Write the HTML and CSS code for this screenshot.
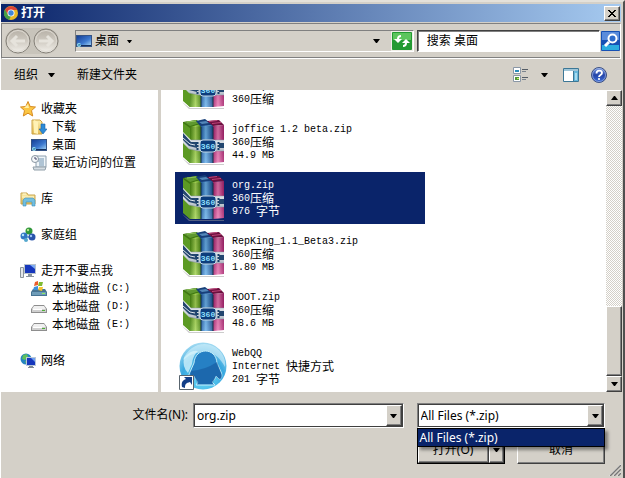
FILE: index.html
```html
<!DOCTYPE html>
<html lang="zh-CN">

<head>
    <meta charset="UTF-8">
    <meta name="viewport" content="width=device-width, initial-scale=1.0">
    <title>打开</title>
    <link rel="stylesheet" href="styles.css">
</head>

<body>
    <!-- shared icons -->
    <svg class="defs" aria-hidden="true">
        <defs>
            <linearGradient id="gGreen"><stop offset="0" stop-color="#4a8a12"/><stop offset=".5" stop-color="#a4d455"/><stop offset="1" stop-color="#47830f"/></linearGradient>
            <linearGradient id="gBlue"><stop offset="0" stop-color="#1e5aa4"/><stop offset=".4" stop-color="#6db4ec"/><stop offset="1" stop-color="#174a8c"/></linearGradient>
            <linearGradient id="gPink"><stop offset="0" stop-color="#a81f6c"/><stop offset=".45" stop-color="#ea79b4"/><stop offset="1" stop-color="#a8226e"/></linearGradient>
            <linearGradient id="gShade" x2="0" y2="1"><stop offset="0" stop-color="#000" stop-opacity=".15"/><stop offset=".35" stop-color="#000" stop-opacity=".1"/><stop offset="1" stop-color="#fff" stop-opacity=".15"/></linearGradient>
            <linearGradient id="gBelt" x2="0" y2="1"><stop offset="0" stop-color="#ffffff"/><stop offset="1" stop-color="#b4bec8"/></linearGradient>
            <linearGradient id="gScreen" x2="1" y2="1"><stop offset="0" stop-color="#153f96"/><stop offset=".6" stop-color="#3d79cf"/><stop offset="1" stop-color="#9accf2"/></linearGradient>
            <linearGradient id="gDisc" x2="0" y2="1"><stop offset="0" stop-color="#b5afa5"/><stop offset=".5" stop-color="#cfcac1"/><stop offset="1" stop-color="#f3f1ec"/></linearGradient>
            <radialGradient id="gBall" cx=".5" cy=".75" r=".75"><stop offset="0" stop-color="#6ee0fa"/><stop offset=".6" stop-color="#3aa9e0"/><stop offset="1" stop-color="#a5dcf2"/></radialGradient>
            <linearGradient id="gFolder" x2="0" y2="1"><stop offset="0" stop-color="#fdf0ae"/><stop offset="1" stop-color="#e3bb55"/></linearGradient>
            <linearGradient id="gHelp" x2="0" y2="1"><stop offset="0" stop-color="#7f9ee4"/><stop offset=".5" stop-color="#2444a8"/><stop offset="1" stop-color="#3c6ed8"/></linearGradient>
        </defs>
        <symbol id="zip" viewBox="0 0 48 48">
            <path d="M3 40l8 6h34v1H10z" fill="#999" opacity=".5"/>
            <path d="M4 4l14-2 4 5v38H11L4 38z" fill="#3f7611"/>
            <path d="M4 5l7 5v35l-7-6z" fill="#5c9a24"/>
            <path d="M11 9l11-3v39H11z" fill="url(#gGreen)"/>
            <path d="M5 4l12-2 4 3-10 3z" fill="#5f9830"/>
            <path d="M8 4l9-1" stroke="#8fc25c"/>
            <path d="M17 3l9-2 8 6-12 2z" fill="#173f79"/>
            <path d="M20 4l7-1 3 2-7 1z" fill="#5387b9"/>
            <path d="M22 8l12-1v38H22z" fill="url(#gBlue)"/>
            <path d="M28 3l12-1 5 5-11 1z" fill="#6c103f"/>
            <path d="M30 3.500l8-1M33 5.500l9-1" stroke="#c0447a"/>
            <path d="M34 8l11-1v37l-11 1z" fill="url(#gPink)"/>
            <path d="M11 9l34-2v37l-11 1H11z" fill="url(#gShade)"/>
            <path d="M22 9v36M34 9v36" stroke="#16344b"/>
            <!-- belt and buckle -->
            <path d="M4 14l8 8h33v11H20l-10-2-6-6z" fill="url(#gBelt)"/>
            <path d="M4 15l8 9h6v6l-8-2-6-6z" fill="#23466f"/>
            <path d="M4 20l7 6 5 1" stroke="#dfe6ec" fill="none"/>
            <path d="M40 25h5v5h-5z" fill="#23466f"/>
            <path d="M12 22h33M10 31l10 2h25" stroke="#8593a0" stroke-width=".5" fill="none"/>
            <path d="M18.500 24v8M39.500 24v8" stroke="#17406c" stroke-width="2" stroke-dasharray="2 1"/>
            <rect x="21" y="22" width="16" height="12" rx="3" fill="#0c3d7c" stroke="#c0d6e5"/>
            <text x="29" y="31" class="zip-label">360</text>
        </symbol>
        <symbol id="drive" viewBox="0 0 16 16">
            <path d="M3 6h10l3 4v4H0v-4z" fill="#8e8e8e"/>
            <path d="M3 7h10l2 3H1z" fill="#f0f0f0"/>
            <path d="M1 10h14v3H1z" fill="#cfcfcf"/>
            <path d="M2 10h9v1H2z" fill="#fff"/>
            <path d="M11 11h3v1h-3z" fill="#4cae35"/>
        </symbol>
        <symbol id="screen" viewBox="0 0 16 14">
            <path d="M0 1h16v12H0z" fill="#355384"/>
            <path d="M1 2h14v9H1z" fill="url(#gScreen)"/>
            <path d="M1 11h14v1H1z" fill="#13305f"/>
            <circle cx="3" cy="11" r="2" fill="#99ddf0"/>
            <path d="M2 11h2v-1" stroke="#1e70a5" fill="none"/>
        </symbol>
        <symbol id="down" viewBox="0 0 7 4"><path d="M0 0h7L4 4H3z" fill="#000"/></symbol>
    </svg>

    <main class="dialog">
        <header class="titlebar">
            <svg class="icon" viewBox="0 0 16 16">
                <circle cx="8" cy="8" r="7" fill="#e8b925"/>
                <path d="M2 5a7 7 0 0 1 12.500 0H8L5 10z" fill="#dc4437"/>
                <path d="M2 4.500L5 10l3 1-2 4A7 7 0 0 1 2 4.500z" fill="#45a047"/>
                <circle cx="8" cy="8" r="3.500" fill="#fff"/>
                <circle cx="8" cy="8" r="2.700" fill="#4087d8"/>
            </svg>
            <h1>打开</h1>
            <button class="close raised" aria-label="关闭"><svg width="8" height="7" viewBox="0 0 8 7"><path d="M0 0l7 7M7 0L0 7M1 0l7 7M8 0L1 7" stroke="#000"/></svg></button>
        </header>

        <nav class="navbar">
            <div class="history">
                <button aria-label="后退"><svg viewBox="0 0 26 26"><circle cx="13" cy="13" r="12" fill="url(#gDisc)" stroke="#858179"/><circle cx="13" cy="13" r="10.500" fill="none" stroke="#dedad2"/><path d="M20 13H7M12 8l-5 5 5 5" fill="none" stroke="#e6e3dc" stroke-width="3"/></svg></button>
                <button aria-label="前进"><svg viewBox="0 0 26 26"><circle cx="13" cy="13" r="12" fill="url(#gDisc)" stroke="#858179"/><circle cx="13" cy="13" r="10.500" fill="none" stroke="#dedad2"/><path d="M6 13h13M14 8l5 5-5 5" fill="none" stroke="#e6e3dc" stroke-width="3"/></svg></button>
            </div>
            <div class="address">
                <svg class="icon"><use href="#screen"/></svg>
                <button class="crumb">桌面 <svg class="tiny"><use href="#down"/></svg></button>
                <button class="history-drop" aria-label="以前的位置"><svg class="arrow"><use href="#down"/></svg></button>
                <button class="refresh" aria-label="刷新">
                    <svg width="20" height="18" viewBox="0 0 20 18"><rect width="20" height="18" rx="1" fill="#239a32"/><path d="M1 1h18v7H1z" fill="#5cc55c"/><path d="M6 8V7q0-3 3-3M14 10v1q0 3-3 3" fill="none" stroke="#fff" stroke-width="2"/><path d="M2 7h8l-4 4zM10 11h8l-4-4z" fill="#fff"/></svg>
                </button>
            </div>
            <div class="search">
                <input type="text" placeholder="搜索 桌面" aria-label="搜索 桌面">
                <button aria-label="搜索">
                    <svg width="19" height="20" viewBox="0 0 19 20"><rect width="19" height="20" rx="1" fill="#1751b4"/><path d="M1 1h17v8H1z" fill="#5b8cdb"/><path d="M1 14h17v5H1z" fill="#2bacdf"/><circle cx="11.500" cy="7.500" r="4" fill="#2f6ccb" stroke="#fff" stroke-width="2"/><path d="M8 11l-4 4" stroke="#fff" stroke-width="3"/></svg>
                </button>
            </div>
        </nav>

        <div class="toolbar">
            <button class="organize">组织 <svg class="arrow"><use href="#down"/></svg></button>
            <button>新建文件夹</button>
            <button class="views" aria-label="更改视图">
                <svg class="icon" viewBox="0 0 16 16"><path d="M.5.5h7v6h-7zM.5 8.500h7v6h-7z" fill="#fff" stroke="#8a97a6"/><path d="M2 3h4v2H2z" fill="#2b8dbb"/><path d="M2 10h4v3H2z" fill="#54973a"/><path d="M4 11h2v1H4z" fill="#ce6"/><path d="M9 2.500h6M9 10.500h6" stroke="#555d66"/><path d="M9 4.500h4M9 12.500h4" stroke="#7c858e"/></svg>
                <svg class="arrow"><use href="#down"/></svg>
            </button>
            <button class="preview" aria-label="显示预览窗格"><svg class="icon" viewBox="0 0 16 16"><path d="M.5 1.500h15v13H.5z" fill="#fff" stroke="#3c7796"/><path d="M1 2h14v2H1z" fill="#9fc5d8"/><path d="M10 4h5v10h-5z" fill="#67b7db"/><path d="M10.500 4v10" stroke="#3c7796"/><path d="M12 6h2v7h-2z" fill="#a8dcef"/></svg></button>
            <button class="help" aria-label="帮助"><svg class="icon" viewBox="0 0 16 16"><circle cx="8" cy="8" r="7.500" fill="url(#gHelp)" stroke="#3e5182"/><circle cx="8" cy="8" r="6.500" fill="none" stroke="#b6c7ee" stroke-width=".6"/><path d="M5.500 6.500c0-4 5.500-3.500 5.500-.5 0 2-3 2-3 4" fill="none" stroke="#fff" stroke-width="1.800"/><circle cx="8" cy="12" r="1.100" fill="#fff"/></svg></button>
        </div>

        <div class="panes">
            <aside class="tree">
                <ul>
                    <li><svg class="icon" viewBox="0 0 16 16"><path d="M8 .5l2.200 5 5.300.5-4 3.600 1.200 5.400L8 12.200 3.300 15l1.200-5.400L.5 6l5.300-.5z" fill="#fbc643" stroke="#d78a20"/><path d="M8 3l1 4H4z" fill="#fff0a8"/></svg>收藏夹</li>
                    <li class="sub"><svg class="icon" viewBox="0 0 16 16"><path d="M1 1h8l2 2v12H1z" fill="url(#gFolder)" stroke="#cba244"/><path d="M3 1l4 2v12l-4-1z" fill="#fff2b5"/><path d="M10 5h4v5h2l-4 5-4-5h2z" fill="#2c8bd8" stroke="#1b62a8" stroke-width=".6"/></svg>下载</li>
                    <li class="sub"><svg class="icon"><use href="#screen"/></svg>桌面</li>
                    <li class="sub"><svg class="icon" viewBox="0 0 16 16"><path d="M5 1h10v11H5z" fill="#eef4f8" stroke="#8e9fae"/><path d="M7 4h6M7 6h6M8 8h5M8 10h5" stroke="#7193b0"/><path d="M2 12h13l-1 3H3z" fill="#d5dde3" stroke="#92a0aa"/><circle cx="4" cy="4" r="3.500" fill="#f5f8fa" stroke="#8996a1"/><path d="M4 2v2h2" fill="none" stroke="#446"/></svg>最近访问的位置</li>
                </ul>
                <ul>
                    <li><svg class="icon" viewBox="0 0 16 16"><path d="M1 2h6l1 2h7v9H1z" fill="url(#gFolder)" stroke="#c8a54f"/><path d="M3 3h3M2 6h12" stroke="#fff8d0"/><path d="M3 15V9l2-2h8l2 2v6h-3v-4H6v4z" fill="#72bfe0" stroke="#3e8fb8" stroke-width=".6"/></svg>库</li>
                </ul>
                <ul>
                    <li><svg class="icon" viewBox="0 0 16 16"><path d="M4 10l4-6 4 6z" fill="none" stroke="#83b5d2" stroke-width="2"/><circle cx="9" cy="4" r="3.500" fill="#2f963a"/><circle cx="4" cy="9" r="3.500" fill="#3277c5"/><circle cx="12" cy="10" r="3.500" fill="#2853ab"/><circle cx="8" cy="3" r="1.200" fill="#b4e58c"/><circle cx="3" cy="8" r="1.200" fill="#b5e5fa"/><circle cx="11" cy="9" r="1.200" fill="#9bc5f5"/><circle cx="6" cy="13" r="2" fill="#56a8ce"/></svg>家庭组</li>
                </ul>
                <ul>
                    <li><svg class="icon" viewBox="0 0 16 16"><path d="M.5 4.500h3v10h-3z" fill="#e3e7ea" stroke="#8b949b"/><path d="M4 1h12v10H4z" fill="#b7c2cd"/><path d="M5 2h10v8H5z" fill="#1637bc"/><path d="M10 2h5v4z" fill="#7eabf3"/><path d="M8 11h4v2h2v1H6v-1h2z" fill="#89949e"/></svg>走开不要点我</li>
                    <li class="sub"><svg class="icon" viewBox="0 0 16 16"><path d="M2 8h12l2 3v4H0v-4z" fill="#477392"/><path d="M1 11h14v3H1z" fill="#6e9cb8"/><path d="M11 12h3v1h-3z" fill="#8df05e"/><path d="M4 1l3-1v4L3 5z" fill="#ea5d2b"/><path d="M8 1l4 0-1 4-4 0z" fill="#7fbb32"/><path d="M3 6l4-1v4L2 9z" fill="#3c8fdb"/><path d="M8 6h4l-1 4-4-1z" fill="#f5c22d"/></svg>本地磁盘<span class="en"> (C:)</span></li>
                    <li class="sub"><svg class="icon"><use href="#drive"/></svg>本地磁盘<span class="en"> (D:)</span></li>
                    <li class="sub"><svg class="icon"><use href="#drive"/></svg>本地磁盘<span class="en"> (E:)</span></li>
                </ul>
                <ul>
                    <li><svg class="icon" viewBox="0 0 16 16"><circle cx="6" cy="6" r="5.500" fill="#2584c1"/><path d="M3 2l4-1 1 3-3 3-3-1zM5 8l3 1-2 2z" fill="#5fc05b"/><path d="M6 4h10v9H6z" fill="#b9c7d8"/><path d="M7 5h8v7H7z" fill="#1637bc"/><path d="M11 5h4v4z" fill="#6e9ff0"/><path d="M9 13h4v1h1v1H8v-1h1z" fill="#808b96"/></svg>网络</li>
                </ul>
            </aside>

            <ul class="files">
                <li class="partial">
                    <svg><use href="#zip"/></svg>
                    <div><p>co.zip</p><p>360<span class="zh">压缩</span></p></div>
                </li>
                <li>
                    <svg><use href="#zip"/></svg>
                    <div><p>joffice 1.2 beta.zip</p><p>360<span class="zh">压缩</span></p><p>44.9 MB</p></div>
                </li>
                <li class="selected">
                    <svg><use href="#zip"/></svg>
                    <div><p>org.zip</p><p>360<span class="zh">压缩</span></p><p>976 <span class="zh">字节</span></p></div>
                </li>
                <li>
                    <svg><use href="#zip"/></svg>
                    <div><p>RepKing_1.1_Beta3.zip</p><p>360<span class="zh">压缩</span></p><p>1.80 MB</p></div>
                </li>
                <li>
                    <svg><use href="#zip"/></svg>
                    <div><p>ROOT.zip</p><p>360<span class="zh">压缩</span></p><p>48.6 MB</p></div>
                </li>
                <li>
                    <svg viewBox="0 0 48 48">
                        <circle cx="24" cy="24" r="23.500" fill="url(#gBall)"/>
                        <path d="M4 18C9 4 24-2 36 5c8 5 11 13 10 20-5-9-9-13-17-14C18 9 11 12 4 18z" fill="#d5f2fb" opacity=".6"/>
                        <path d="M5 16q7-9 14-7-5 4-6 13l-4 9q-6-6-4-15z" fill="#d9f6fc" opacity=".75"/>
                        <path d="M15 21c1-16 22-16 23 0l4 9c2 4 0 8-2 7l-3-3c-1 3-2 4-4 6l3 3H17l2-3c-2-2-3-4-4-6l-4 2c-2 0-1-4 0-6z" fill="#2680c4" stroke="#c3eefa"/>
                        <path d="M12 29q14-1 26-9l4 11c2 4 0 7-2 6l-3-3-4 8H19l-4-8-4 2z" fill="#15599f" opacity=".6"/>
                        <path d="M.5 33.500h14v14H.5z" fill="#fff" stroke="#58646e"/>
                        <path d="M3 45c-1-5 1-7 4-8l-2-2h8v8l-2-3c-4 1-5 2-5 6z" fill="#123f88"/>
                    </svg>
                    <div><p>WebQQ</p><p>Internet <span class="zh">快捷方式</span></p><p>201 <span class="zh">字节</span></p></div>
                </li>
            </ul>

            <div class="scrollbar">
                <button class="raised" aria-label="向上"><svg class="arrow up"><use href="#down"/></svg></button>
                <div class="track"><div class="thumb raised"></div></div>
                <button class="raised" aria-label="向下"><svg class="arrow"><use href="#down"/></svg></button>
            </div>
        </div>

        <footer class="footer">
            <label for="filename">文件名(N):</label>
            <div class="combo">
                <input id="filename" type="text" value="org.zip">
                <button class="raised" aria-label="文件列表"><svg class="arrow"><use href="#down"/></svg></button>
            </div>
            <div class="right">
                <div class="combo filter">
                    <select aria-label="文件类型"><option>All Files (*.zip)</option></select>
                    <span class="drop raised"><svg class="arrow"><use href="#down"/></svg></span>
                    <ul class="menu"><li>All Files (*.zip)</li></ul>
                </div>
                <div class="actions">
                    <div class="open">
                        <button class="raised">打开(O)</button>
                        <button class="raised split" aria-label="更多打开方式"><svg class="arrow"><use href="#down"/></svg></button>
                    </div>
                    <button class="raised cancel">取消</button>
                </div>
            </div>
            <svg class="grip" viewBox="0 0 12 12"><path d="M0 12L12 0M4 12l8-8M8 12l4-4" stroke="#fff"/><path d="M1 12L12 1M5 12l7-7M9 12l3-3" stroke="#777" stroke-width="1.500"/></svg>
        </footer>
    </main>
</body>

</html>
```
FILE: styles.css
```css
* {
    margin: 0;
    padding: 0;
    box-sizing: border-box;
}

body {
    background-color: #d4d0c8;
    font: 12px/18px "Liberation Sans", "Noto Sans CJK SC", sans-serif;
    color: #000;
}

ul {
    list-style: none;
}

button {
    background: none;
    border: none;
    font: inherit;
    color: inherit;
    display: flex;
    align-items: center;
    justify-content: center;
}

input,
select {
    border: none;
    outline: none;
    border-radius: 0;
    background-color: #fff;
    font: inherit;
    color: #000;
    min-width: 0;
}

svg {
    display: block;
    flex: none;
}

.defs {
    position: absolute;
    width: 0;
    height: 0;
}

.icon {
    width: 16px;
    height: 16px;
}

.arrow {
    width: 7px;
    height: 4px;
}

.tiny {
    width: 5px;
    height: 3px;
}

.up {
    transform: rotate(180deg);
}

.zip-label {
    font: bold 8px "Liberation Mono", monospace;
    fill: #8fe0ff;
    text-anchor: middle;
}

.raised {
    background-color: #d4d0c8;
    border: 1px solid;
    border-color: #fff #404040 #404040 #fff;
    box-shadow: inset -1px -1px #808080;
}

.dialog {
    display: flex;
    flex-direction: column;
    height: 100vh;
    min-height: 400px;
    padding-top: 2px;
    border-top: 2px solid #e4e1da;
    border-left: 1px solid #fff;
    border-right: 2px solid #505050;
}

/* title */
.titlebar {
    display: flex;
    align-items: center;
    height: 18px;
    margin-right: 2px;
    padding: 0 1px 0 2px;
    background: linear-gradient(to right, #0a246a, #a6caf0);
}

.titlebar h1 {
    flex: 1;
    padding-left: 2px;
    font-size: 12px;
    line-height: 18px;
    color: #fff;
}

.close {
    width: 16px;
    height: 15px;
}

/* navigation */
.navbar {
    display: flex;
    align-items: center;
    height: 36px;
    margin: 1px 2px 0 0;
    border: 1px solid;
    border-color: #808080 #fff #fff #808080;
    box-shadow: inset 0 -1px #808080;
}

.history {
    display: flex;
    gap: 2px;
    margin-left: 3px;
    border-radius: 13px;
    background-color: #c8c4bb;
}

.history button,
.history svg {
    width: 26px;
    height: 26px;
}

.address {
    display: flex;
    align-items: center;
    flex: 338;
    height: 22px;
    margin-left: 16px;
    border: 1px solid;
    border-color: #808080 #fff #fff #808080;
}

.crumb {
    gap: 8px;
    padding-left: 3px;
}

.history-drop {
    width: 28px;
    height: 20px;
    margin-left: auto;
}

.refresh {
    border: 1px solid #f0eee8;
}

.search {
    display: flex;
    align-items: center;
    flex: 204;
    height: 22px;
    margin-left: 3px;
}

.search input {
    flex: 1;
    height: 22px;
    padding-left: 9px;
    border: 1px solid;
    border-color: #404040 #fff #fff #404040;
    box-shadow: inset 1px 1px #808080;
}

.search input::placeholder {
    color: #000;
    opacity: 1;
}

.search button {
    padding-left: 1px;
}

/* toolbar */
.toolbar {
    display: flex;
    align-items: center;
    height: 31px;
    padding: 0 16px 0 13px;
}

.organize {
    gap: 10px;
    margin-right: 22px;
}

.views {
    gap: 12px;
    margin-left: auto;
}

.preview {
    margin: 0 12px 0 15px;
}

/* panes */
.panes {
    display: flex;
    flex: 1;
    min-height: 0;
    margin-right: 1px;
}

.tree {
    width: 157px;
    padding: 10px 0 0 19px;
    background-color: #fff;
    overflow: hidden;
}

.tree ul {
    margin-bottom: 18px;
}

.tree li {
    display: flex;
    align-items: center;
    gap: 5px;
    height: 18px;
    white-space: pre;
}

.tree .sub {
    padding-left: 11px;
}

.tree .en {
    margin-left: -5px;
}

.en,
.files {
    font-family: "Liberation Mono", monospace;
    font-size: 10px;
}

.files {
    display: flex;
    flex: 1;
    flex-direction: column;
    justify-content: flex-end;
    gap: 4px;
    margin-left: 3px;
    padding-left: 14px;
    background-color: #fff;
    overflow: hidden;
}

.files li {
    display: flex;
    flex: none;
    align-items: center;
    gap: 5px;
    width: 250px;
    height: 52px;
    padding-left: 4px;
}

.files li > svg {
    width: 48px;
    height: 48px;
}

.files p {
    display: flex;
    align-items: flex-start;
    height: 13px;
    line-height: 13px;
    white-space: pre;
}

.files .partial div {
    padding-top: 13px;
}

.zh {
    font-family: "Noto Sans CJK SC", sans-serif;
    font-size: 12px;
    line-height: 11px;
}

.selected {
    background-color: #0a246a;
    color: #fff;
}

.scrollbar {
    display: flex;
    flex-direction: column;
    width: 16px;
}

.scrollbar button {
    height: 16px;
}

.track {
    display: flex;
    flex: 1;
    flex-direction: column;
    justify-content: flex-end;
    background: repeating-conic-gradient(#fff 0 25%, #d4d0c8 0 50%) 0 0 / 2px 2px;
}

.thumb {
    height: 26%;
}

/* file name and buttons */
.footer {
    position: relative;
    display: flex;
    align-items: flex-start;
    height: 86px;
    padding: 11px 18px 0 0;
    font-family: "Noto Sans", "Noto Sans CJK SC", sans-serif;
}

.footer label {
    width: 187px;
    line-height: 24px;
    text-align: right;
}

.combo {
    position: relative;
    display: flex;
    flex: 206;
    height: 25px;
    margin-left: 5px;
    padding: 1px;
    background-color: #fff;
    border: 1px solid;
    border-color: #808080 #fff #fff #808080;
    box-shadow: inset 1px 1px #404040, inset -1px -1px #404040;
}

.combo input,
.combo select {
    flex: 1;
    margin: 1px 0 1px 1px;
    padding-left: 1px;
    appearance: none;
}

.combo .raised {
    display: flex;
    align-items: center;
    justify-content: center;
    width: 16px;
}

.drop {
    pointer-events: none;
}

.right {
    flex: 188;
    margin-left: 13px;
}

.filter {
    margin-left: 0;
}

.menu {
    position: absolute;
    z-index: 1;
    top: 24px;
    left: -1px;
    right: -1px;
    background-color: #0a246a;
    border: 1px solid #000;
    box-shadow: 3px 3px 3px rgba(0, 0, 0, 0.4);
    color: #fff;
}

.menu li {
    padding-left: 2px;
    height: 17px;
    line-height: 17px;
}

.actions {
    display: flex;
    gap: 12px;
    margin-top: 8px;
}

.actions button {
    height: 28px;
}

.open {
    display: flex;
    flex: 1;
    border: 1px solid #000;
    height: 28px;
}

.actions .open button {
    flex: 1;
    height: 26px;
}

.actions .open .split {
    flex: none;
    width: 15px;
}

.cancel {
    flex: 1;
}

.grip {
    position: absolute;
    right: 2px;
    bottom: 2px;
    width: 12px;
    height: 12px;
}
```
